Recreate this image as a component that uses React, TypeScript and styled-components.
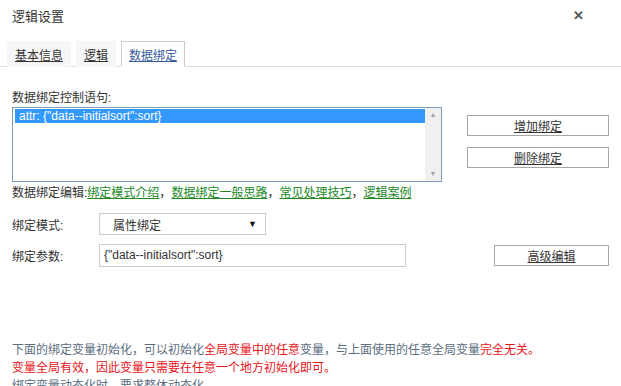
import * as React from "react";
import styled, { createGlobalStyle } from "styled-components";

const GlobalStyle = createGlobalStyle`
  html, body {
    margin: 0;
    padding: 0;
    background: #fff;
  }
  body {
    font-family: "Liberation Sans", "Noto Sans CJK SC", sans-serif;
    font-size: 12px;
    color: #333;
  }
`;

const Dialog = styled.div`
  width: 621px;
  height: 386px;
  overflow: hidden;
  background: #fff;
`;

const Header = styled.div`
  display: flex;
  align-items: center;
  justify-content: space-between;
  height: 30px;
  padding: 0 37px 0 12px;
  font-size: 13px;
  color: #333;
`;

const Close = styled.span`
  font-size: 13px;
  font-weight: bold;
  color: #555;
  line-height: 1;
`;

const TabBar = styled.div`
  display: flex;
  gap: 5px;
  margin-top: 11px;
  padding-left: 7px;
  border-bottom: 1px solid #ddd;
  height: 25px;
`;

const Tab = styled.a<{ $active?: boolean }>`
  display: flex;
  align-items: center;
  padding: 0 7px;
  height: 26px;
  box-sizing: border-box;
  margin-bottom: -1px;
  background: ${(p) => (p.$active ? "#fff" : "#f7f7f7")};
  border: 1px solid ${(p) => (p.$active ? "#ccc" : "transparent")};
  border-bottom-color: ${(p) => (p.$active ? "#fff" : "transparent")};
  color: ${(p) => (p.$active ? "#3a5a9a" : "#333")};
  text-decoration: underline;
  cursor: pointer;
`;

const Body = styled.div`
  padding: 22px 12px 0;
`;

const Label = styled.div`
  line-height: 18px;
`;

const BindRow = styled.div`
  display: flex;
  align-items: flex-start;
`;

const ListBox = styled.div`
  display: flex;
  width: 430px;
  height: 75px;
  box-sizing: border-box;
  border: 1px solid #7f9db9;
`;

const ListItems = styled.div`
  flex: 1;
  padding: 1px 0 0 2px;
`;

const ListItem = styled.div<{ $selected?: boolean }>`
  height: 14px;
  line-height: 14px;
  padding-left: 4px;
  background: ${(p) => (p.$selected ? "#3399ff" : "transparent")};
  color: ${(p) => (p.$selected ? "#fff" : "#333")};
`;

const ScrollBar = styled.div`
  width: 16px;
  background: #f0f0f0;
  display: flex;
  flex-direction: column;
  justify-content: space-between;
  align-items: center;
  padding: 3px 0;
  color: #a3a3a3;
  font-size: 7px;
  line-height: 8px;
`;

const SideButtons = styled.div`
  display: flex;
  flex-direction: column;
  gap: 11px;
  margin: 8px 0 0 25px;
`;

const Button = styled.button<{ $width: number; $offset?: number }>`
  width: ${(p) => p.$width}px;
  height: 21px;
  margin-left: ${(p) => p.$offset ?? 0}px;
  padding: 0;
  background: #fff;
  border: 1px solid #a6a6a6;
  font-family: inherit;
  font-size: 12px;
  color: #333;
  text-decoration: underline;
  cursor: pointer;
`;

const LinksLine = styled.div`
  line-height: 20px;
  margin-top: 1px;
`;

const Link = styled.a`
  color: #21891f;
  text-decoration: underline;
  cursor: pointer;
`;

const FieldRow = styled.div<{ $top: number }>`
  display: flex;
  align-items: center;
  margin-top: ${(p) => p.$top}px;
`;

const FieldLabel = styled.div`
  width: 87px;
  flex-shrink: 0;
`;

const Select = styled.div`
  display: flex;
  align-items: center;
  justify-content: space-between;
  width: 167px;
  height: 22px;
  box-sizing: border-box;
  border: 1px solid #ccc;
  padding: 0 8px 0 13px;
`;

const Arrow = styled.span`
  font-size: 9px;
  color: #111;
`;

const Input = styled.div`
  width: 307px;
  height: 23px;
  flex-shrink: 0;
  box-sizing: border-box;
  border: 1px solid #ccc;
  padding: 0 4px;
  line-height: 21px;
`;

const Notes = styled.div`
  margin-top: 74px;
  color: #5b6d80;
  line-height: 18px;
`;

const Red = styled.span`
  color: #e8161b;
`;

export default function App() {
  return (
    <Dialog>
      <GlobalStyle />
      <Header>
        <span>逻辑设置</span>
        <Close>✕</Close>
      </Header>
      <TabBar>
        <Tab>基本信息</Tab>
        <Tab>逻辑</Tab>
        <Tab $active>数据绑定</Tab>
      </TabBar>
      <Body>
        <Label>数据绑定控制语句:</Label>
        <BindRow>
          <ListBox>
            <ListItems>
              <ListItem $selected>attr: {'{"data--initialsort":sort}'}</ListItem>
            </ListItems>
            <ScrollBar>
              <span>▲</span>
              <span>▼</span>
            </ScrollBar>
          </ListBox>
          <SideButtons>
            <Button $width={142}>增加绑定</Button>
            <Button $width={142}>删除绑定</Button>
          </SideButtons>
        </BindRow>
        <LinksLine>
          数据绑定编辑:<Link>绑定模式介绍</Link>，<Link>数据绑定一般思路</Link>，
          <Link>常见处理技巧</Link>，<Link>逻辑案例</Link>
        </LinksLine>
        <FieldRow $top={10}>
          <FieldLabel>绑定模式:</FieldLabel>
          <Select>
            <span>属性绑定</span>
            <Arrow>▼</Arrow>
          </Select>
        </FieldRow>
        <FieldRow $top={9}>
          <FieldLabel>绑定参数:</FieldLabel>
          <Input>{'{"data--initialsort":sort}'}</Input>
          <Button $width={120} $offset={88}>
            高级编辑
          </Button>
        </FieldRow>
        <Notes>
          <div>
            下面的绑定变量初始化，可以初始化<Red>全局变量中的任意</Red>变量，与上面使用的任意全局变量<Red>完全无关。</Red>
          </div>
          <div>
            <Red>变量全局有效，因此变量只需要在任意一个地方初始化即可。</Red>
          </div>
          <div>绑定变量动态化时，要求整体动态化。</div>
        </Notes>
      </Body>
    </Dialog>
  );
}
